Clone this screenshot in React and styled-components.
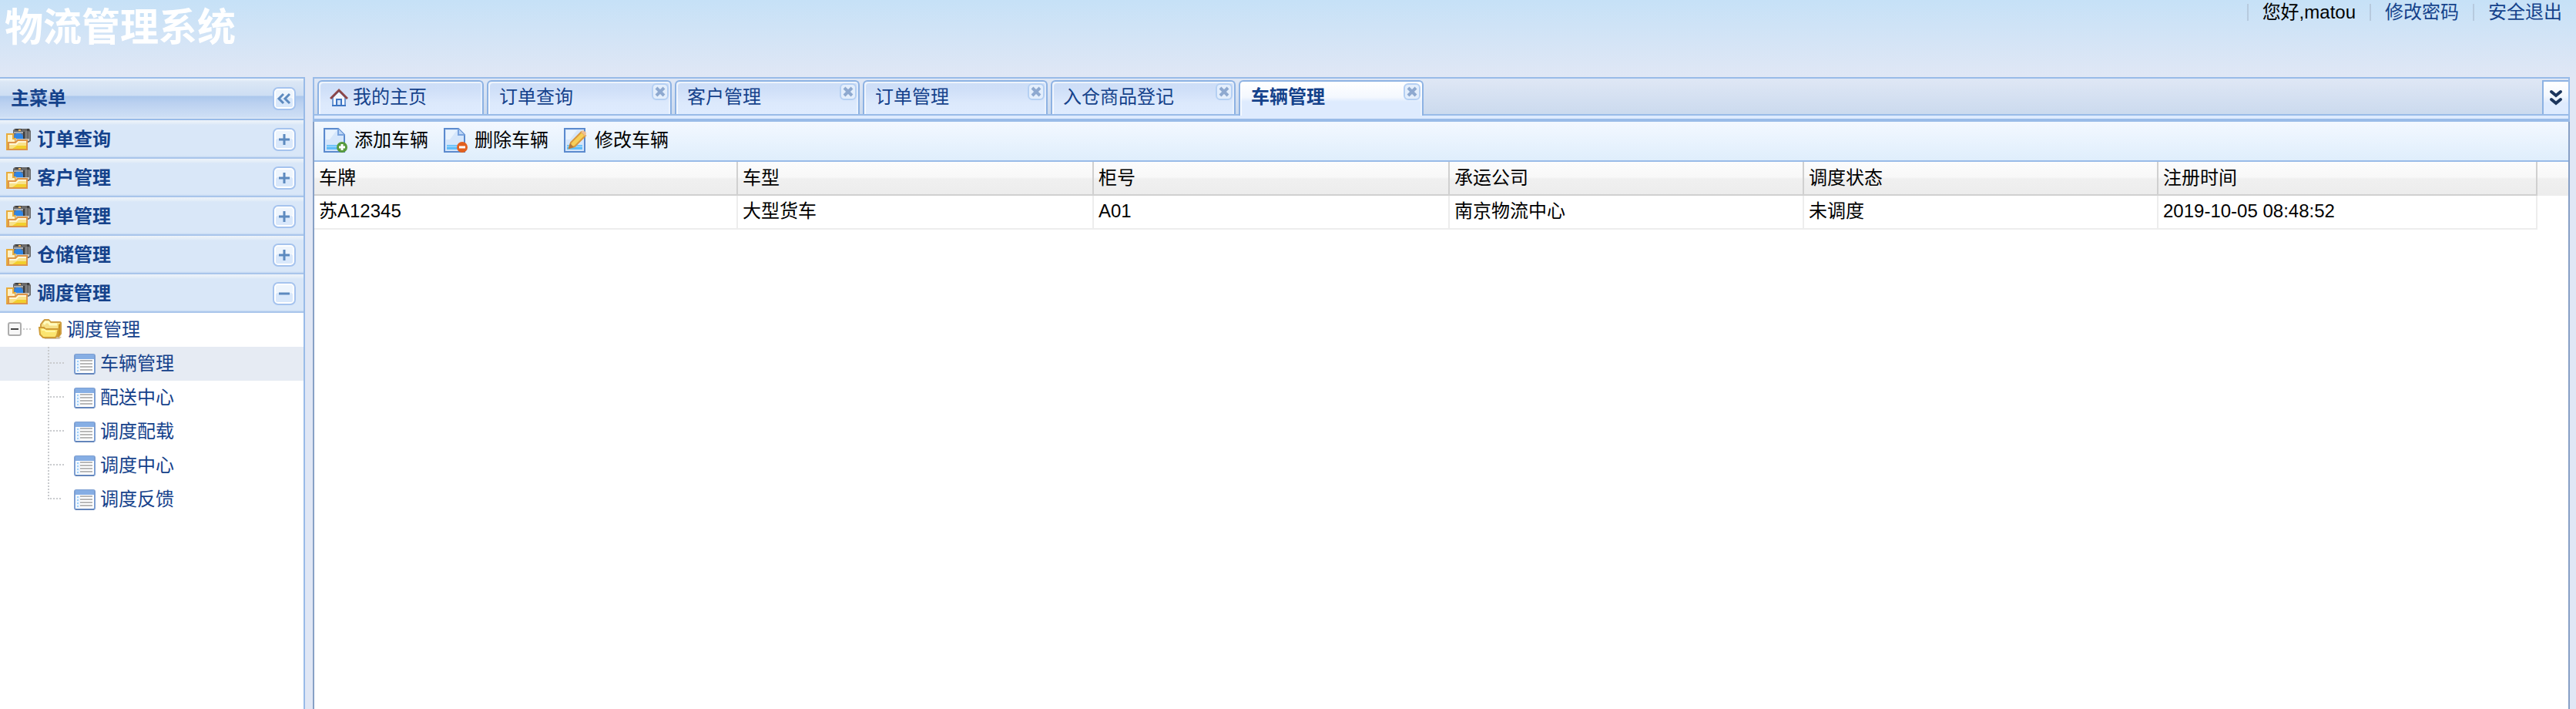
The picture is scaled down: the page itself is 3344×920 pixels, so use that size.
import React from 'react';
import styled, { createGlobalStyle, css } from 'styled-components';

const border = '#99bbe8';
const navy = '#15428b';

const GlobalStyle = createGlobalStyle`
  html, body { margin: 0; height: 100%; }
  #root { height: 100%; }
  *, *::before, *::after { box-sizing: border-box; }
  body, button {
    font-family: "Liberation Sans", "Noto Sans CJK SC", sans-serif;
    font-size: 24px;
    line-height: 32px;
  }
  body { background: #dfe8f6; color: #000; }
  button { margin: 0; padding: 0; border: 0; background: none; color: inherit; text-align: left; cursor: pointer; }
  svg { display: block; flex: none; }
`;

const Page = styled.div`
  min-height: 100vh;
  display: flex;
  flex-direction: column;
  background: #e0e7f5;
`;

const Header = styled.header`
  height: 100px;
  display: flex;
  justify-content: space-between;
  align-items: flex-start;
  background: linear-gradient(#c6e1f7, #e0e7f5);
`;

const Title = styled.h1`
  margin: 0;
  padding-left: 6px;
  font-size: 50px;
  line-height: 72px;
  font-weight: bold;
  color: #fff;
`;

const UserNav = styled.nav`
  display: flex;
  align-items: center;
`;

const UserItem = styled.span`
  display: flex;
  align-items: center;
  padding-right: 18px;
  &::before {
    content: '';
    width: 2px;
    height: 22px;
    margin-right: 18px;
    background: #b7cade;
  }
`;

const UserLink = styled.a`
  color: ${navy};
  text-decoration: none;
`;

const Body = styled.div`
  flex: 1;
  display: flex;
  gap: 10px;
  padding-right: 8px;
`;

const Sidebar = styled.aside`
  width: 396px;
  flex: none;
  border: solid ${border};
  border-width: 2px 2px 0 0;
  background: #fff;
`;

const SidebarHead = styled.div`
  height: 54px;
  padding: 0 10px 0 14px;
  display: flex;
  align-items: center;
  justify-content: space-between;
  border-bottom: 2px solid ${border};
  background: linear-gradient(#f0f5fb 0, #dbe7f5 4px, #cddef3 22px, #abc7ec 23px, #bbd1f0 32px, #cedff5 50px, #e2ebf7 52px);
  color: ${navy};
  font-weight: bold;
`;

const SectionHead = styled.button`
  width: 100%;
  height: 50px;
  padding: 2px 10px 0 8px;
  display: flex;
  align-items: center;
  gap: 8px;
  border-bottom: 2px solid #a9c5eb;
  background: linear-gradient(#eef3fa 0, #e3edf8 4px, #d9e7f8 6px, #d9e7f8 46px, #c5d9f2 48px);
  color: ${navy};
  font-weight: bold;
`;

const SectionName = styled.span`
  flex: 1;
`;

const ToolButton = styled.button`
  display: block;
  height: 30px;
`;

const Tree = styled.ul`
  margin: 0;
  padding: 0;
  list-style: none;
`;

const TreeRow = styled.li`
  height: 44px;
  display: flex;
  align-items: center;
  background: ${(p) => (p.$selected ? '#e6ebf3' : '#fff')};
`;

const TreeLink = styled.a`
  flex: 1;
  height: 44px;
  padding-left: ${(p) => p.$inset}px;
  display: flex;
  align-items: center;
  gap: 6px;
  color: ${navy};
  text-decoration: none;
`;

const LeafIndent = styled.span`
  width: 62px;
  flex: none;
`;

const Main = styled.main`
  flex: 1;
  min-width: 0;
  display: flex;
  flex-direction: column;
  border: solid ${border};
  border-width: 2px 2px 0;
`;

const TabBar = styled.div`
  height: 48px;
  padding: 2px 0 0 4px;
  display: flex;
  gap: 4px;
  background: linear-gradient(#dfe7f5, #cbdaee);
  border-bottom: 2px solid ${border};
`;

const TabFrame = styled.div`
  width: ${(p) => p.$width}px;
  height: ${(p) => (p.$active ? 46 : 44)}px;
  padding-right: 2px;
  display: flex;
  align-items: flex-start;
  border: 2px solid #8db2e3;
  border-bottom: 0;
  border-radius: 6px 6px 0 0;
  box-shadow: inset 2px 2px 0 rgba(255, 255, 255, 0.65), inset -2px 0 0 rgba(255, 255, 255, 0.4);
  background: ${(p) =>
    p.$active
      ? 'linear-gradient(#fff 0, #f4f8fe 20px, #deebfe 26px, #deebfe 100%)'
      : 'linear-gradient(#cddef7 0, #cfdff8 10px, #dce9fc 28px, #deebfe 100%)'};
`;

const TabButton = styled.button`
  flex: 1;
  height: 40px;
  padding-left: 14px;
  display: flex;
  align-items: center;
  gap: 6px;
  color: ${navy};
  font-weight: ${(p) => (p.$active ? 'bold' : 'normal')};
`;

const CloseButton = styled.button`
  height: 22px;
  margin-top: 2px;
`;

const TabMenuButton = styled.button`
  margin-left: auto;
  width: 34px;
  height: 44px;
  display: flex;
  align-items: center;
  justify-content: center;
  border: 2px solid #8db2e3;
  border-width: 2px 0 0 2px;
  background: linear-gradient(#fff 0, #f4f8fe 18px, #deebfe 28px);
`;

const TabStrip = styled.div`
  height: 8px;
  background: #deebfe;
  border-bottom: 4px solid ${border};
`;

const Panel = styled.section`
  flex: 1;
  margin: 0 -2px;
  border: solid #87a0c6;
  border-width: 0 2px;
  background: #fff;
`;

const Toolbar = styled.div`
  height: 52px;
  padding: 0 12px 2px;
  display: flex;
  align-items: center;
  gap: 20px;
  border-bottom: 2px solid ${border};
  background: linear-gradient(#f3f8ff, #dfeefc);
`;

const Action = styled.button`
  display: flex;
  align-items: center;
  gap: 8px;
`;

const Grid = styled.div`
  padding-right: 40px;
  background: linear-gradient(#fcfcfc 0, #f8f8f8 20px, #f0f0f0 22px, #ececec 44px) no-repeat 0 0 / 100% 44px;
`;

const Table = styled.table`
  width: 100%;
  table-layout: fixed;
  border-collapse: separate;
  border-spacing: 0;
`;

const cell = css`
  height: 44px;
  padding: 0 6px;
  overflow: hidden;
  text-align: left;
  font-weight: normal;
  white-space: nowrap;
`;

const HeadCell = styled.th`
  ${cell}
  border: solid #d0d0d0;
  border-width: 0 2px 2px 0;
`;

const Cell = styled.td`
  ${cell}
  padding-bottom: 2px;
  border: solid #ededed;
  border-width: 0 2px 2px 0;
  background: #fff;
`;

const toolMarks = {
  plus: 'M15 8v14M8 15h14',
  minus: 'M8 15h14',
  left: 'M14 9l-6 6 6 6M22 9l-6 6 6 6',
};

function ToolIcon({ kind }) {
  return (
    <svg width="30" height="30" viewBox="0 0 30 30" fill="none">
      <rect x="1" y="1" width="28" height="28" rx="6" fill="#fff" stroke="#a5c3ee" strokeWidth="2" />
      <rect x="4" y="4" width="22" height="10" rx="2" fill="#eef5fd" />
      <rect x="4" y="14" width="22" height="12" rx="2" fill="#d9e8fb" />
      <path d={toolMarks[kind]} stroke="#5d8abf" strokeWidth="3" />
    </svg>
  );
}

function SectionIcon() {
  return (
    <svg width="32" height="32" viewBox="0 0 32 32">
      <path d="M9 4l2-2h19l2 3v13l-3 2H9z" fill="#6a6a6a" />
      <path d="M12 2h8v2h-8zM27 2h3v3h-3z" fill="#3f3f3f" />
      <path d="M22 6h2v11h-2z" fill="#3c3c3c" />
      <path d="M26 5v13M30 6v11" stroke="#969696" strokeWidth="1" />
      <path d="M16 3h3v2h-3z" fill="#f4b860" />
      <path d="M10 6h12v2H10z" fill="#a9adb3" />
      <path d="M10 9h12v9H10z" fill="#5c7ba6" />
      <path d="M13 8h6l3 4v5H11v-5z" fill="#2f86e6" />
      <path d="M1 29V9h8v6h3v4h15v10z" fill="#fdf0c4" stroke="#e8ac3c" strokeWidth="2" />
      <path d="M12 15h18v3H12z" fill="#c9c6c0" />
      <path d="M3 29V20h9l3-3h12v12z" fill="#f8e28a" stroke="#dd9549" strokeWidth="2" />
      <path d="M14 24h12v4H8z" fill="#f2cf2c" />
      <path d="M4 22h9l3-3h10" fill="none" stroke="#fff6d6" strokeWidth="2" />
      <path d="M1 29h27" stroke="#dd9549" strokeWidth="2" />
    </svg>
  );
}

function RootBranch() {
  return (
    <svg width="42" height="44" viewBox="0 0 42 44" fill="none">
      <rect x="11" y="13" width="16" height="16" rx="2" fill="#f7f7f7" stroke="#adadad" strokeWidth="2" />
      <path d="M14 21h10" stroke="#444" strokeWidth="2" />
      <path d="M30 21h11" stroke="#cfcfcf" strokeWidth="2" strokeDasharray="2 2" />
    </svg>
  );
}

function FolderIcon() {
  return (
    <svg width="30" height="32" viewBox="0 0 30 32">
      <path d="M6 25h24l1-18v17l-4 4H8z" fill="#8a6a3a" opacity=".4" />
      <path d="M3 14V9l3-4 2-2h5l3 3h12l1 1v14l-3 4z" fill="#f6e087" stroke="#cf9f45" strokeWidth="2" />
      <path d="M7 9l2-3h4l2 3h9" fill="none" stroke="#fffbc0" strokeWidth="3" />
      <path d="M26 9l2-1v14l-3 3z" fill="#c9921c" />
      <path d="M1 13h6l2 2h17l-2 8-2 3H6l-4-4z" fill="#fbe56f" stroke="#cf9c36" strokeWidth="2" />
      <path d="M4 16h4l2 2h12" fill="none" stroke="#fff7a4" strokeWidth="2" />
    </svg>
  );
}

function LeafBranch({ last }) {
  return (
    <svg width="24" height="44" viewBox="0 0 24 44" fill="none" stroke="#c9cbce" strokeWidth="2" strokeDasharray="2 2">
      <path d={last ? 'M1 0v22' : 'M1 0v44'} />
      <path d={last ? 'M3 21h16' : 'M3 21h20'} />
    </svg>
  );
}

function ListIcon() {
  return (
    <svg width="28" height="28" viewBox="0 0 28 28">
      <rect x="1" y="2" width="26" height="25" rx="2" fill="#fff" stroke="#7d9fd2" strokeWidth="2" />
      <path d="M2 2h24v6H2z" fill="#86aee4" />
      <path d="M2 27h24" stroke="#6385bb" strokeWidth="2" />
      <path d="M3 9h5v16H3z" fill="#eaf4ff" />
      <path d="M5 10v16" stroke="#9fd0fb" strokeWidth="2" strokeDasharray="2 2" />
      <path d="M8 10h16M8 14h16M8 18h16M8 22h16" stroke="#b8b8b8" strokeWidth="2" />
    </svg>
  );
}

function HomeIcon() {
  return (
    <svg width="24" height="24" viewBox="0 0 24 24" fill="none">
      <path d="M4 12v11h16V12l-8-8z" fill="#f3f7fd" stroke="#6f9ad4" strokeWidth="2" />
      <path d="M9 23v-8h6v8" fill="#cfe2fa" stroke="#3e76c4" strokeWidth="2" />
      <path d="M3 23h18" stroke="#3e76c4" strokeWidth="2" />
      <path d="M1 14L12 3l11 11" stroke="#8d4648" strokeWidth="3" />
    </svg>
  );
}

function CloseIcon() {
  return (
    <svg width="22" height="22" viewBox="0 0 22 22" fill="none">
      <rect x="1" y="1" width="20" height="20" rx="5" fill="#e3eefc" stroke="#b5d0f3" strokeWidth="2" />
      <path d="M6 6l10 10M16 6L6 16" stroke="#8ea9d0" strokeWidth="4" />
    </svg>
  );
}

function DoubleChevronDown() {
  return (
    <svg width="18" height="22" viewBox="0 0 18 22" fill="none" stroke="#1b355c" strokeWidth="4" strokeLinecap="round">
      <path d="M3 3l6 5 6-5M3 13l6 5 6-5" />
    </svg>
  );
}

function PageIcon({ kind }) {
  return (
    <svg width="32" height="34" viewBox="1 0 32 34" fill="none">
      <path d={kind === 'edit' ? 'M2 2h26v30H2z' : 'M2 2h18l8 8v22H2z'} fill="#d5e6fb" stroke="#5b8ace" strokeWidth="2" />
      <path d="M4 4h14l-9 12H4z" fill="#e9f3fe" />
      <path d="M5 23h20v6H5z" fill="#62bdf8" />
      <path d="M5 25h20" stroke="#b9e3fc" strokeWidth="1" />
      {kind !== 'edit' && <path d="M20 2v8h8" fill="#bdd6f6" stroke="#79a3de" strokeWidth="2" />}
      {kind === 'add' && (
        <>
          <circle cx="25" cy="26" r="7" fill="#579a3c" />
          <path d="M25 22v8M21 26h8" stroke="#fff" strokeWidth="3" />
        </>
      )}
      {kind === 'remove' && (
        <>
          <circle cx="25" cy="26" r="7" fill="#e2601f" />
          <path d="M21 26h8" stroke="#fff" strokeWidth="3" />
        </>
      )}
      {kind === 'edit' && (
        <>
          <path d="M8 27l2-7L24 6l5 5-14 14z" fill="#f6cf58" stroke="#d9983e" strokeWidth="2" />
          <path d="M23 6l3-2 4 3-1 5z" fill="#eebf94" />
          <path d="M7 28l2-7 5 5z" fill="#b1763a" />
        </>
      )}
    </svg>
  );
}

function LeafRow({ name, selected, last }) {
  return (
    <TreeRow $selected={selected}>
      <LeafIndent />
      <LeafBranch last={last} />
      <TreeLink href={`#${name}`} $inset={10}><ListIcon />{name}</TreeLink>
    </TreeRow>
  );
}

const sections = ['订单查询', '客户管理', '订单管理', '仓储管理', '调度管理'];
const leaves = ['车辆管理', '配送中心', '调度配载', '调度中心', '调度反馈'];
const tabs = ['订单查询', '客户管理', '订单管理', '入仓商品登记', '车辆管理'];
const columns = [
  { name: '车牌', width: 550, value: '苏A12345' },
  { name: '车型', width: 462, value: '大型货车' },
  { name: '柜号', width: 462, value: 'A01' },
  { name: '承运公司', width: 460, value: '南京物流中心' },
  { name: '调度状态', width: 460, value: '未调度' },
  { name: '注册时间', width: 492, value: '2019-10-05 08:48:52' },
];
const actions = [
  { kind: 'add', name: '添加车辆' },
  { kind: 'remove', name: '删除车辆' },
  { kind: 'edit', name: '修改车辆' },
];

export default function App() {
  return (
    <Page>
      <GlobalStyle />
      <Header>
        <Title>物流管理系统</Title>
        <UserNav>
          <UserItem>您好,matou</UserItem>
          <UserItem><UserLink href="#password">修改密码</UserLink></UserItem>
          <UserItem><UserLink href="#logout">安全退出</UserLink></UserItem>
        </UserNav>
      </Header>
      <Body>
        <Sidebar>
          <SidebarHead>
            主菜单
            <ToolButton aria-label="收起菜单"><ToolIcon kind="left" /></ToolButton>
          </SidebarHead>
          {sections.map((name, i) => (
            <SectionHead key={name} aria-expanded={i === 4}>
              <SectionIcon />
              <SectionName>{name}</SectionName>
              <ToolIcon kind={i === 4 ? 'minus' : 'plus'} />
            </SectionHead>
          ))}
          <Tree>
            <TreeRow>
              <RootBranch />
              <TreeLink href="#dispatch" $inset={8}><FolderIcon />调度管理</TreeLink>
            </TreeRow>
            {leaves.map((name, i) => (
              <LeafRow key={name} name={name} selected={i === 0} last={i === leaves.length - 1} />
            ))}
          </Tree>
        </Sidebar>
        <Main>
          <TabBar>
            <TabFrame $width={216}>
              <TabButton><HomeIcon />我的主页</TabButton>
            </TabFrame>
            {tabs.map((name, i) => (
              <TabFrame key={name} $width={240} $active={i === 4}>
                <TabButton $active={i === 4}>{name}</TabButton>
                <CloseButton aria-label={`关闭${name}`}><CloseIcon /></CloseButton>
              </TabFrame>
            ))}
            <TabMenuButton aria-label="更多标签"><DoubleChevronDown /></TabMenuButton>
          </TabBar>
          <TabStrip />
          <Panel>
            <Toolbar>
              {actions.map((a) => (
                <Action key={a.kind}><PageIcon kind={a.kind} />{a.name}</Action>
              ))}
            </Toolbar>
            <Grid>
              <Table>
                <colgroup>
                  {columns.map((c) => <col key={c.name} width={c.width} />)}
                </colgroup>
                <thead>
                  <tr>{columns.map((c) => <HeadCell key={c.name} scope="col">{c.name}</HeadCell>)}</tr>
                </thead>
                <tbody>
                  <tr>{columns.map((c) => <Cell key={c.name}>{c.value}</Cell>)}</tr>
                </tbody>
              </Table>
            </Grid>
          </Panel>
        </Main>
      </Body>
    </Page>
  );
}
